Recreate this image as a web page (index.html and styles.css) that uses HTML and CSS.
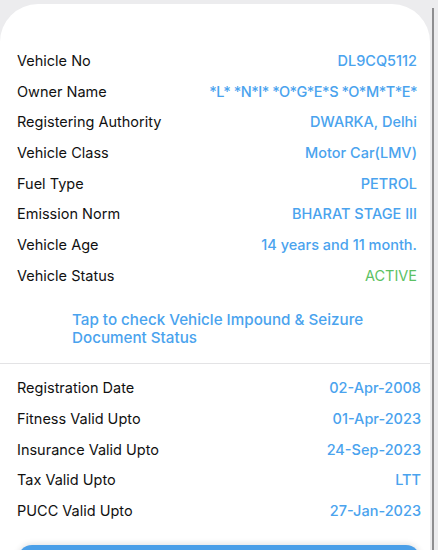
FILE: index.html
```html
<!DOCTYPE html>
<html lang="en">
<head>
    <meta charset="UTF-8">
    <meta name="viewport" content="width=device-width, initial-scale=1.0">
    <title>Vehicle Details</title>
    <link rel="stylesheet" href="styles.css">
</head>
<body>
    <div class="sheet">
        <div class="details">
            <div class="row"><span class="label">Vehicle No</span><span class="value">DL9CQ5112</span></div>
            <div class="row"><span class="label">Owner Name</span><span class="value masked">*L* *N*I* *O*G*E*S *O*M*T*E*</span></div>
            <div class="row"><span class="label">Registering Authority</span><span class="value">DWARKA, Delhi</span></div>
            <div class="row"><span class="label">Vehicle Class</span><span class="value">Motor Car(LMV)</span></div>
            <div class="row"><span class="label">Fuel Type</span><span class="value">PETROL</span></div>
            <div class="row"><span class="label">Emission Norm</span><span class="value">BHARAT STAGE III</span></div>
            <div class="row"><span class="label">Vehicle Age</span><span class="value">14 years and 11 month.</span></div>
            <div class="row"><span class="label">Vehicle Status</span><span class="value active">ACTIVE</span></div>
        </div>

        <div class="impound">
            <a class="impound-link" href="#">Tap to check Vehicle Impound &amp; Seizure<br>Document Status</a>
        </div>

        <div class="details validity">
            <div class="row"><span class="label">Registration Date</span><span class="value">02-Apr-2008</span></div>
            <div class="row"><span class="label">Fitness Valid Upto</span><span class="value">01-Apr-2023</span></div>
            <div class="row"><span class="label">Insurance Valid Upto</span><span class="value">24-Sep-2023</span></div>
            <div class="row"><span class="label">Tax Valid Upto</span><span class="value">LTT</span></div>
            <div class="row"><span class="label">PUCC Valid Upto</span><span class="value">27-Jan-2023</span></div>
        </div>

        <div class="action-bar"></div>
    </div>
    <div class="scrollbar"></div>
</body>
</html>
```

FILE: styles.css
```css
body {
    font-family: Inter, "Liberation Sans", Arial, sans-serif;
    background-color: #ececee;
    margin: 0;
    height: 550px;
    overflow: hidden;
    position: relative;
}
.sheet {
    width: 430px;
    margin-top: 4px;
    background-color: #fff;
    border-radius: 38px 38px 0 0;
    padding-top: 41px;
    height: 560px;
    box-sizing: border-box;
}
.details {
    padding: 0 13px 0 17px;
}
.row {
    display: flex;
    justify-content: space-between;
    align-items: center;
    height: 30.7px;
    font-size: 14.5px;
}
.label {
    color: #111;
}
.value {
    color: #4aa3ee;
    font-weight: 500;
}
.value.masked {
    letter-spacing: -0.5px;
}
.value.active {
    color: #5cc163;
    font-weight: 400;
}
.impound {
    padding: 20px 0 16px 72px;
    font-size: 15.2px;
    line-height: 18px;
    border-bottom: 1px solid #e3e3e5;
}
.impound-link {
    color: #4aa3ee;
    font-weight: 500;
    text-decoration: none;
}
.validity {
    padding: 9px 9px 0 17px;
}
.action-bar {
    margin: 19px 10px 0 18px;
    height: 40px;
    background-color: #4a9fe8;
    border-radius: 14px;
    box-shadow: 0 -1px 6px rgba(0, 0, 0, 0.12);
}
.scrollbar {
    position: absolute;
    top: 8px;
    left: 432px;
    width: 2px;
    height: 560px;
    background-color: #8e8e90;
}
```
